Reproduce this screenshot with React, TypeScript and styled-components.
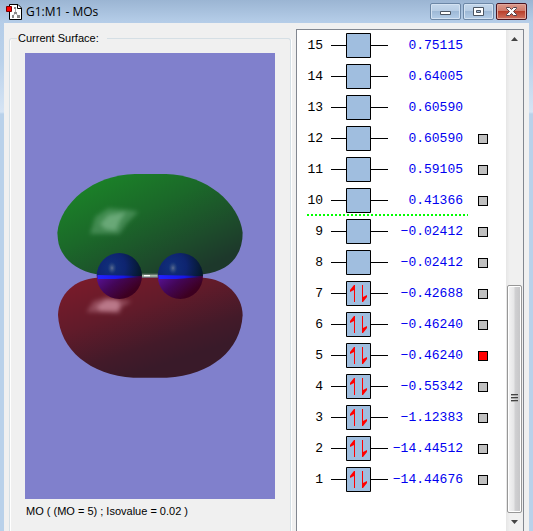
import React, { useState } from "react";
import styled, { createGlobalStyle } from "styled-components";

const GlobalStyle = createGlobalStyle`
  * { box-sizing: border-box; }
  body { margin: 0; font-family: "Liberation Sans", Arial, sans-serif; font-size: 11px; color: #000; }
`;

const Frame = styled.div`
  min-height: 100vh;
  display: flex;
  flex-direction: column;
  padding: 0 4px;
  background: linear-gradient(#9bb5d3 0, #b5cde8 22px, #b9d1ea 60px, #d6e4f4 112px, #b9d1ea 114px);
`;

const TitleBar = styled.header`
  height: 23px;
  display: flex;
  align-items: center;
  padding: 0 2px;
`;

const Title = styled.h1`
  flex: 1;
  margin: 0 0 0 3px;
  font: 400 12px/16px "Open Sans", "Noto Sans", sans-serif;
`;

const WindowButtons = styled.div`
  display: flex;
  gap: 2px;
  align-self: flex-start;
  margin-top: 3px;
`;

const WindowButton = styled.button<{ $close?: boolean }>`
  width: 31px;
  height: 17px;
  padding: 0;
  display: grid;
  place-items: center;
  border: 1px solid ${(p) => (p.$close ? "#4a1420" : "#6c87a6")};
  border-radius: 2px;
  box-shadow: inset 0 0 0 1px ${(p) => (p.$close ? "#e0a79c" : "#d3e2f2")};
  background: ${(p) =>
    p.$close
      ? "linear-gradient(#dc9a8c 0, #cf7868 48%, #b9402c 50%, #d07260 100%)"
      : "linear-gradient(#c4d7eb 0, #b6cce4 48%, #9eb9d6 50%, #b4cde8 100%)"};
`;

const Client = styled.main`
  flex: 1;
  display: flex;
  gap: 5px;
  padding: 6px 5px 0 5px;
  background: #f0f0f0;
`;

const SurfaceGroup = styled.fieldset`
  flex: 1;
  min-width: 0;
  margin: 2px 0 0;
  padding: 8px 15px 13px;
  border: 1px solid #d5dfe5;
  border-bottom: 0;
  border-radius: 3px 3px 0 0;
  box-shadow: inset 1px 0 #fff, 1px 0 #fff;
`;

const Legend = styled.legend`
  margin-left: -8px;
  padding: 0 8px 0 1px;
  line-height: 14px;
`;

const SurfaceBody = styled.div`
  height: 100%;
  display: flex;
  flex-direction: column;
`;

const Viewport = styled.svg`
  flex: 1;
  width: 100%;
  min-height: 300px;
  display: block;
  background: #8080cc;
`;

const Caption = styled.p`
  margin: 5px 0 0 1px;
  line-height: 14px;
`;

const LevelPanel = styled.section`
  flex: 0 0 228px;
  display: flex;
  border: 1px solid #828790;
  border-bottom: 0;
  background: #fff;
`;

const LevelList = styled.ol`
  flex: 1;
  margin: 0;
  padding: 0 0 0 10px;
  list-style: none;
`;

const LevelRow = styled.li`
  display: flex;
  align-items: center;
  gap: 10px;
  height: 31px;
`;

const Level = styled.label<{ $gap?: boolean }>`
  width: 161px;
  height: 31px;
  display: grid;
  grid-template-columns: 16px 57px 1fr;
  column-gap: 8px;
  align-items: center;
  padding-right: 5px;
  font: 13px/16px "Liberation Mono", "Courier New", monospace;
  background: ${(p) =>
    p.$gap ? "repeating-linear-gradient(90deg, #00ff00 0 2px, #fff 2px 4px) bottom / 100% 2px no-repeat" : "none"};
`;

const Index = styled.span`
  text-align: right;
`;

const Orbital = styled.svg`
  display: block;
`;

const Energy = styled.span`
  min-width: 0;
  justify-self: end;
  display: flex;
  justify-content: flex-end;
  white-space: nowrap;
  color: #0000f0;
`;

const Pick = styled.input`
  appearance: none;
  width: 10px;
  height: 10px;
  margin: 0;
  border: 1px solid #000;
  background: #c0c0c0;
  &:checked { background: #f00; }
`;

const ScrollBar = styled.div`
  width: 17px;
  display: flex;
  flex-direction: column;
  padding-right: 1px;
  background: linear-gradient(90deg, #e6e6e6, #f0f0f0 4px);
`;

const ScrollButton = styled.button`
  height: 18px;
  padding: 0;
  border: 0;
  display: grid;
  place-items: center;
  background: none;
`;

const Track = styled.div`
  flex: 1;
  display: grid;
  grid-template-rows: 238fr 229fr;
`;

const Thumb = styled.div`
  grid-row: 2;
  display: grid;
  place-items: center;
  margin: 0 0 0 1px;
  border: 1px solid #979797;
  border-radius: 2px;
  box-shadow: inset 0 0 0 1px #fff;
  background: linear-gradient(90deg, #f4f4f4 0, #e6e6e7 45%, #d0d0d2 55%, #c4c4c6 100%);
`;

const levels = [
  [15, "0.75115"], [14, "0.64005"], [13, "0.60590"], [12, "0.60590"], [11, "0.59105"],
  [10, "0.41366"], [9, "−0.02412"], [8, "−0.02412"], [7, "−0.42688"], [6, "−0.46240"],
  [5, "−0.46240"], [4, "−0.55342"], [3, "−1.12383"], [2, "−14.44512"], [1, "−14.44676"],
] as [number, string][];

const FileIcon = () => (
  <svg width="17" height="18" viewBox="0 0 17 18" aria-hidden="true">
    <path d="M3.5 1.5H12L15.5 5V16.5H3.5Z" fill="#fff" stroke="#000" />
    <path d="M11.5 1.5V5.5H15.5" fill="none" stroke="#000" />
    <path d="M9.5 5V10L6 14M9.5 10L13 14" fill="none" stroke="#aaa" />
    <path d="M8 4h2v2H8zM8 9h3v2H8zM6 12h2v3H6zM11 12h3v3h-3z" fill="#888" />
    <path d="M.5 3.5h5v5h-5z" fill="#f00" stroke="#700" />
  </svg>
);

const OrbitalBox = ({ filled }: { filled: boolean }) => (
  <Orbital width="57" height="25" viewBox="0 0 57 25" aria-hidden="true">
    <path d="M0 12.5H57" stroke="#000" />
    <path d="M15.5 .5h24v24h-24z" fill="#a0bedf" stroke="#000" />
    {filled && (
      <path d="M24 4V21H23V9L19 11V9L23 4ZM31 4H32V16L36 14V16L32 21H31Z" fill="#f00" />
    )}
  </Orbital>
);

const Atom = ({ cx }: { cx: number }) => (
  <g transform={`translate(${cx} 348)`}>
    <path d="M-68 0A68 69 0 0 1 68 0Z" fill="url(#atomTop)" />
    <path d="M-68 0A68 69 0 0 0 68 0Z" fill="url(#atomBottom)" />
    <ellipse cx="-22" cy="-24" rx="14" ry="19" fill="url(#atomShine)" />
    <path d="M-66 -3L36 -1L64 3L-12 9H-64Z" fill="url(#atomBand)" />
  </g>
);

const MolecularSurface = () => (
  <Viewport viewBox="-45 -321 750 1338" role="img" aria-label="Molecular orbital surface">
    <defs>
      <linearGradient id="green" x1=".08" y1=".15" x2=".78" y2=".95">
        <stop offset="0" stopColor="#1b8228" />
        <stop offset=".4" stopColor="#1b6829" />
        <stop offset=".75" stopColor="#1d4c2b" />
        <stop offset="1" stopColor="#1d382b" />
      </linearGradient>
      <linearGradient id="red" x1=".08" y1="0" x2=".6" y2=".85">
        <stop offset="0" stopColor="#7c1b2a" />
        <stop offset=".45" stopColor="#611b2a" />
        <stop offset=".8" stopColor="#431a29" />
        <stop offset="1" stopColor="#391a29" />
      </linearGradient>
      <radialGradient id="atomTop" gradientUnits="userSpaceOnUse" cx="-25" cy="-28" r="95">
        <stop offset="0" stopColor="#11307c" />
        <stop offset=".45" stopColor="#0e2470" />
        <stop offset="1" stopColor="#041725" />
      </radialGradient>
      <linearGradient id="atomBottom" x1="0" y1=".2" x2=".75" y2=".7">
        <stop offset="0" stopColor="#54108c" />
        <stop offset=".45" stopColor="#430657" />
        <stop offset="1" stopColor="#3d0020" />
      </linearGradient>
      <linearGradient id="atomBand">
        <stop offset="0" stopColor="#2222ff" />
        <stop offset=".6" stopColor="#1717e8" />
        <stop offset="1" stopColor="#15104a" />
      </linearGradient>
      <radialGradient id="atomShine">
        <stop offset="0" stopColor="#5c6c90" />
        <stop offset="1" stopColor="#294679" stopOpacity="0" />
      </radialGradient>
      <filter id="soften" x="-30%" y="-50%" width="160%" height="200%">
        <feGaussianBlur stdDeviation="7" />
      </filter>
    </defs>
    <path
      d="M52 218C60 130 160 44 285 42H378C500 44 598 130 608 218C608 285 570 333 490 343H170C95 330 58 280 54 240Z"
      fill="url(#green)"
    />
    <g filter="url(#soften)" fill="#7ab789">
      <path d="M150 222L166 170L205 145L268 150L295 156L262 188L238 222Z" opacity=".4" />
      <path d="M180 192L205 165L258 156L240 182L228 212L196 208Z" opacity=".7" />
    </g>
    <path d="M300 341H356V353H300Z" fill="#65776a" />
    <path d="M304 345H354V350H304Z" fill="#a8b8a8" />
    <path d="M312 345H330V349H312Z" fill="#fff" />
    <path
      d="M170 353C105 358 56 400 54 465C60 570 150 645 280 653H380C515 645 602 570 608 465C606 405 560 358 490 353Z"
      fill="url(#red)"
    />
    <g filter="url(#soften)" fill="#c88a9b">
      <path d="M140 456L160 424L200 412L275 424L245 442L238 460Z" opacity=".4" />
      <path d="M168 440L198 420L232 420L242 436L232 454L180 452Z" opacity=".75" />
    </g>
    <Atom cx={238} />
    <Atom cx={421} />
  </Viewport>
);

export default function App() {
  const [selected, setSelected] = useState(5);
  return (
    <>
      <GlobalStyle />
      <Frame>
        <TitleBar>
          <FileIcon />
          <Title>G1:M1 - MOs</Title>
          <WindowButtons>
            <WindowButton aria-label="Minimize">
              <svg width="13" height="11" viewBox="0 0 13 11">
                <path d="M1.5 5.5h10v3h-10z" fill="#fff" stroke="#4b5562" />
              </svg>
            </WindowButton>
            <WindowButton aria-label="Maximize">
              <svg width="13" height="11" viewBox="0 0 13 11">
                <path d="M1.5 1.5h10v8h-10z" fill="#fff" stroke="#4b5562" />
                <path d="M4.5 4.5h4v2h-4z" fill="#a7c0dc" stroke="#4b5562" />
              </svg>
            </WindowButton>
            <WindowButton $close aria-label="Close">
              <svg width="13" height="11" viewBox="0 0 13 11">
                <path
                  d="M1.5 1.5h3l2 2 2-2h3v1l-3 3 3 3v1h-3l-2-2-2 2h-3v-1l3-3-3-3z"
                  fill="#fff"
                  stroke="#53434b"
                />
              </svg>
            </WindowButton>
          </WindowButtons>
        </TitleBar>
        <Client>
          <SurfaceGroup>
            <Legend>Current Surface:</Legend>
            <SurfaceBody>
              <MolecularSurface />
              <Caption>MO ( (MO = 5) ; Isovalue = 0.02 )</Caption>
            </SurfaceBody>
          </SurfaceGroup>
          <LevelPanel aria-label="Orbital energies">
            <LevelList>
              {levels.map(([n, energy]) => (
                <LevelRow key={n}>
                  <Level htmlFor={`mo-${n}`} $gap={n === 10}>
                    <Index>{n}</Index>
                    <OrbitalBox filled={n <= 7} />
                    <Energy>{energy}</Energy>
                  </Level>
                  {n <= 12 && (
                    <Pick
                      id={`mo-${n}`}
                      type="checkbox"
                      checked={selected === n}
                      onChange={() => setSelected(n)}
                    />
                  )}
                </LevelRow>
              ))}
            </LevelList>
            <ScrollBar>
              <ScrollButton aria-label="Scroll up">
                <svg width="7" height="4" viewBox="0 0 7 4"><path d="M0 4L3.5 0L7 4Z" fill="#444" /></svg>
              </ScrollButton>
              <Track>
                <Thumb>
                  <svg width="7" height="9" viewBox="0 0 7 9">
                    <path d="M0 .5H7M0 3.5H7M0 6.5H7" stroke="#444" />
                    <path d="M0 1.5H7M0 4.5H7M0 7.5H7" stroke="#aaa" />
                  </svg>
                </Thumb>
              </Track>
              <ScrollButton aria-label="Scroll down">
                <svg width="7" height="4" viewBox="0 0 7 4"><path d="M0 0L3.5 4L7 0Z" fill="#444" /></svg>
              </ScrollButton>
            </ScrollBar>
          </LevelPanel>
        </Client>
      </Frame>
    </>
  );
}
